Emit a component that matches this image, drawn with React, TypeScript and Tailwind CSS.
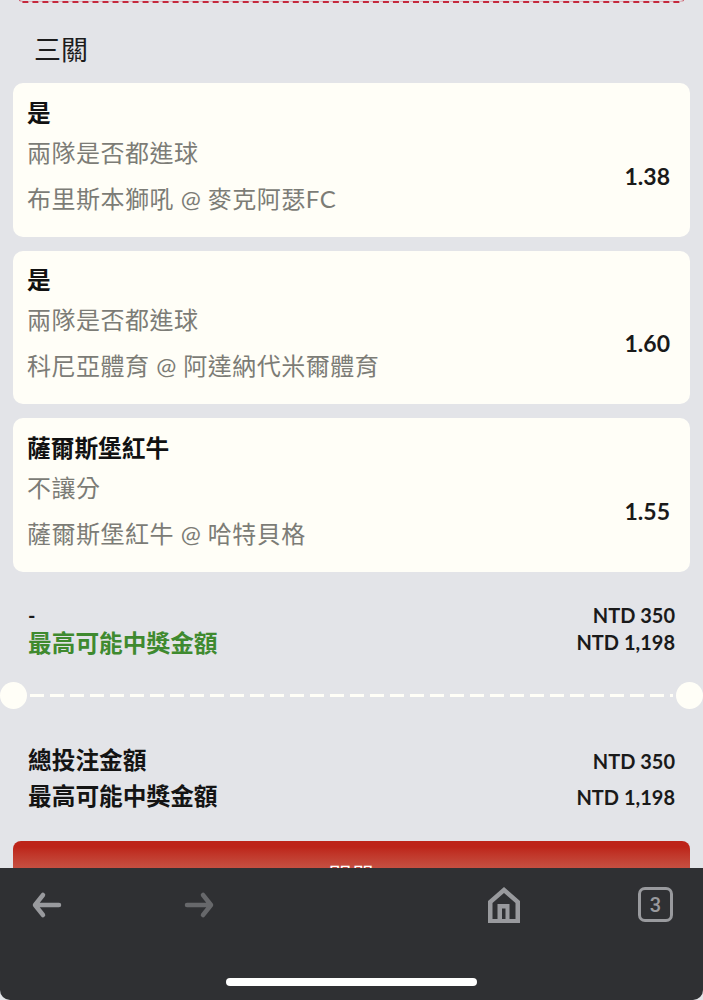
import React from 'react';

const bets = [
  { pick: '是', market: '兩隊是否都進球', match: '布里斯本獅吼 @ 麥克阿瑟FC', odds: '1.38' },
  { pick: '是', market: '兩隊是否都進球', match: '科尼亞體育 @ 阿達納代米爾體育', odds: '1.60' },
  { pick: '薩爾斯堡紅牛', market: '不讓分', match: '薩爾斯堡紅牛 @ 哈特貝格', odds: '1.55' },
];

const BetCard = ({ pick, market, match, odds }: (typeof bets)[number]) => (
  <div className="h-[153.5px] rounded-[10px] bg-[#fffef7] pl-[14px] pr-[20px] flex items-center justify-between">
    <div className="-mt-[5px]">
      <div className="text-[23.7px] leading-[30px] font-bold text-[#111]">{pick}</div>
      <div className="text-[24px] leading-[36px] tracking-[0.5px] text-[#7c7c76] mt-[7px]">{market}</div>
      <div className="text-[24px] leading-[36px] tracking-[0.5px] text-[#7c7c76] mt-[10px]">{match}</div>
    </div>
    <div className="pt-[32px] text-[23px] font-bold text-[#1a1a1a]">{odds}</div>
  </div>
);

const Row = ({ label, value, labelClass }: { label: string; value: string; labelClass: string }) => (
  <div className="flex items-center justify-between">
    <span className={`font-bold ${labelClass}`}>{label}</span>
    <span className="text-[20px] font-bold text-[#1a1a1a]">{value}</span>
  </div>
);

export default function App() {
  return (
    <div className="relative h-[1000px] w-[703px] overflow-hidden bg-[#e3e4e8] font-['Lato','Noto_Sans_CJK_TC',sans-serif]">
      {/* Previous section edge */}
      <div className="h-[4px] mx-[19px] -mt-px rounded-b-[8px] border-b-2 border-dashed border-[#c5283d]" />

      <h2 className="pl-[34px] mt-[29px] h-[51px] text-[27px] leading-[35px] text-[#1c1c1c] font-normal">三關</h2>

      <div className="px-[13px] flex flex-col gap-[14px]">
        {bets.map((bet, i) => (
          <BetCard key={i} {...bet} />
        ))}
      </div>

      {/* Leg summary */}
      <div className="pl-[28px] pr-[28px] mt-[29px]">
        <div className="flex items-center justify-between h-[28px]">
          <span className="font-bold text-[20px] text-[#1a1a1a]">-</span>
          <span className="text-[20px] font-bold text-[#1a1a1a]">NTD 350</span>
        </div>
        <div className="flex items-start justify-between h-[27px]">
          <span className="font-bold text-[23.7px] text-[#3f8a2f] leading-[28px]">最高可能中獎金額</span>
          <span className="text-[20px] font-bold text-[#1a1a1a] leading-[27px]">NTD 1,198</span>
        </div>
      </div>

      {/* Ticket divider */}
      <div className="mt-[26.5px] flex items-center h-[27px]">
        <div className="h-[27px] w-[27px] shrink-0 rounded-full bg-[#fffef7]" />
        <div className="flex-1 mx-[3px] h-[3px] bg-[repeating-linear-gradient(90deg,#fffef7_0,#fffef7_14px,transparent_14px,transparent_20px)]" />
        <div className="h-[27px] w-[27px] shrink-0 rounded-full bg-[#fffef7]" />
      </div>

      {/* Totals */}
      <div className="pl-[28px] pr-[28px] mt-[34px] flex flex-col gap-[1px]">
        <Row label="總投注金額" value="NTD 350" labelClass="text-[23.7px] text-[#141414] leading-[35px]" />
        <Row label="最高可能中獎金額" value="NTD 1,198" labelClass="text-[23.7px] text-[#141414] leading-[35px]" />
      </div>

      <button className="block mx-[13px] mt-[27px] w-[677px] h-[60px] rounded-t-[8px] bg-linear-to-b from-[#bd2419] from-10% to-[#cf8176] text-center text-white text-[23px] pt-[8px] leading-[34px]">
        開單
      </button>

      {/* Browser toolbar */}
      <div className="absolute inset-x-0 bottom-0 h-[132px] rounded-b-[10px] bg-[#2f3033]">
        <svg className="absolute left-[31px] top-[23px]" width="32" height="28" viewBox="0 0 32 28" fill="none" stroke="#999a9e" strokeWidth="4.5" strokeLinecap="round" strokeLinejoin="round">
          <path d="M28 14H5M12 4 4 14l8 10" />
        </svg>
        <svg className="absolute left-[183px] top-[23px]" width="32" height="28" viewBox="0 0 32 28" fill="none" stroke="#67686b" strokeWidth="4.5" strokeLinecap="round" strokeLinejoin="round">
          <path d="M4 14h23M20 4l8 10-8 10" />
        </svg>
        <svg className="absolute left-[487px] top-[19px]" width="34" height="36" viewBox="0 0 34 36" fill="#999a9e">
          <path fillRule="evenodd" d="M17 0 33 14V36H1V14ZM17 6 5.5 16V32H10.5V17H22.5V32H28.5V16ZM15 21.5V32H18.5V21.5Z" />
        </svg>
        <div className="absolute left-[638px] top-[19px] h-[35px] w-[35px] rounded-[7px] border-[3.5px] border-[#999a9e] flex items-center justify-center font-['Roboto',sans-serif] text-[20px] font-medium text-[#999a9e]">
          3
        </div>
        <div className="absolute left-[226px] top-[110px] h-[8px] w-[251px] rounded-full bg-white" />
      </div>
    </div>
  );
}
